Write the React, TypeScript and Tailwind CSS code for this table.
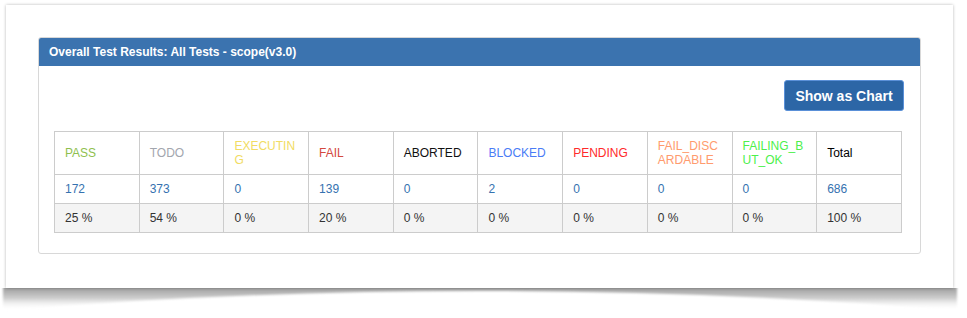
import React from "react";

/* ---------------- DATA ---------------- */

const statuses = [
  { name: "PASS", color: "text-[#8fbf4f]", count: 172, pct: "25 %" },
  { name: "TODO", color: "text-[#a2a6ae]", count: 373, pct: "54 %" },
  { name: "EXECUTING", color: "text-[#f1dc63]", count: 0, pct: "0 %" },
  { name: "FAIL", color: "text-[#d4493f]", count: 139, pct: "20 %" },
  { name: "ABORTED", color: "text-[#111111]", count: 0, pct: "0 %" },
  { name: "BLOCKED", color: "text-[#4a7cf6]", count: 2, pct: "0 %" },
  { name: "PENDING", color: "text-[#ff2a2a]", count: 0, pct: "0 %" },
  { name: "FAIL_DISCARDABLE", color: "text-[#ff9b6e]", count: 0, pct: "0 %" },
  { name: "FAILING_BUT_OK", color: "text-[#4cf04c]", count: 0, pct: "0 %" },
  { name: "Total", color: "text-black", count: 686, pct: "100 %" },
];

const cell = "border border-[#cccccc] px-[10px] py-[7px] text-left align-middle break-all";

/* ---------------- MAIN COMPONENT ---------------- */

export default function App() {
  return (
    <div className="w-[967px] h-[318px] bg-white font-['Liberation_Sans',Arial,sans-serif] text-[12px] leading-[14px] overflow-hidden">
      {/* FRAME */}
      <div className="ml-[6px] mt-[5px] w-[947px] h-[283px] bg-white shadow-[0_0_3px_rgba(0,0,0,0.28)] px-[32px] pt-[32px] relative z-10">
        {/* PANEL */}
        <div className="w-[883px] border border-[#d8d8d8] rounded-[3px] overflow-hidden">
          <div className="h-[28px] bg-[#3b73af] px-[10px] flex items-center text-white font-bold text-[12px]">
            Overall Test Results: All Tests - scope(v3.0)
          </div>

          <div className="pl-[15px] pr-[17px] pt-[14px] pb-[20px]">
            <div className="flex justify-end mr-[-1px]">
              <button className="w-[120px] h-[31px] bg-[#2c66a6] border border-[#5a90d8] rounded-[3px] text-white font-bold text-[14px]">
                Show as Chart
              </button>
            </div>

            <table className="mt-[20px] w-[848px] table-fixed border-collapse">
              <thead>
                <tr className="h-[43px]">
                  {statuses.map((s) => (
                    <th key={s.name} className={`${cell} font-normal ${s.color}`}>
                      {s.name}
                    </th>
                  ))}
                </tr>
              </thead>
              <tbody>
                <tr className="h-[29px]">
                  {statuses.map((s) => (
                    <td key={s.name} className={`${cell} text-[#3572b0]`}>
                      {s.count}
                    </td>
                  ))}
                </tr>
                <tr className="h-[29px] bg-[#f4f4f4]">
                  {statuses.map((s) => (
                    <td key={s.name} className={`${cell} text-[#333333]`}>
                      {s.pct}
                    </td>
                  ))}
                </tr>
              </tbody>
            </table>
          </div>
        </div>
      </div>

      {/* CURVED DROP SHADOW UNDER THE FRAME */}
      <svg width="967" height="30" className="block">
        <defs>
          <linearGradient id="curl" x1="0" y1="0" x2="0" y2="1">
            <stop offset="0" stopColor="#979797" />
            <stop offset="0.5" stopColor="#cdcdcd" />
            <stop offset="1" stopColor="#ffffff" stopOpacity="0" />
          </linearGradient>
          <filter id="soft">
            <feGaussianBlur stdDeviation="1.2" />
          </filter>
        </defs>
        <path d="M3 -2 H957 V22 Q480 -16 3 22 Z" fill="url(#curl)" filter="url(#soft)" />
      </svg>
    </div>
  );
}
